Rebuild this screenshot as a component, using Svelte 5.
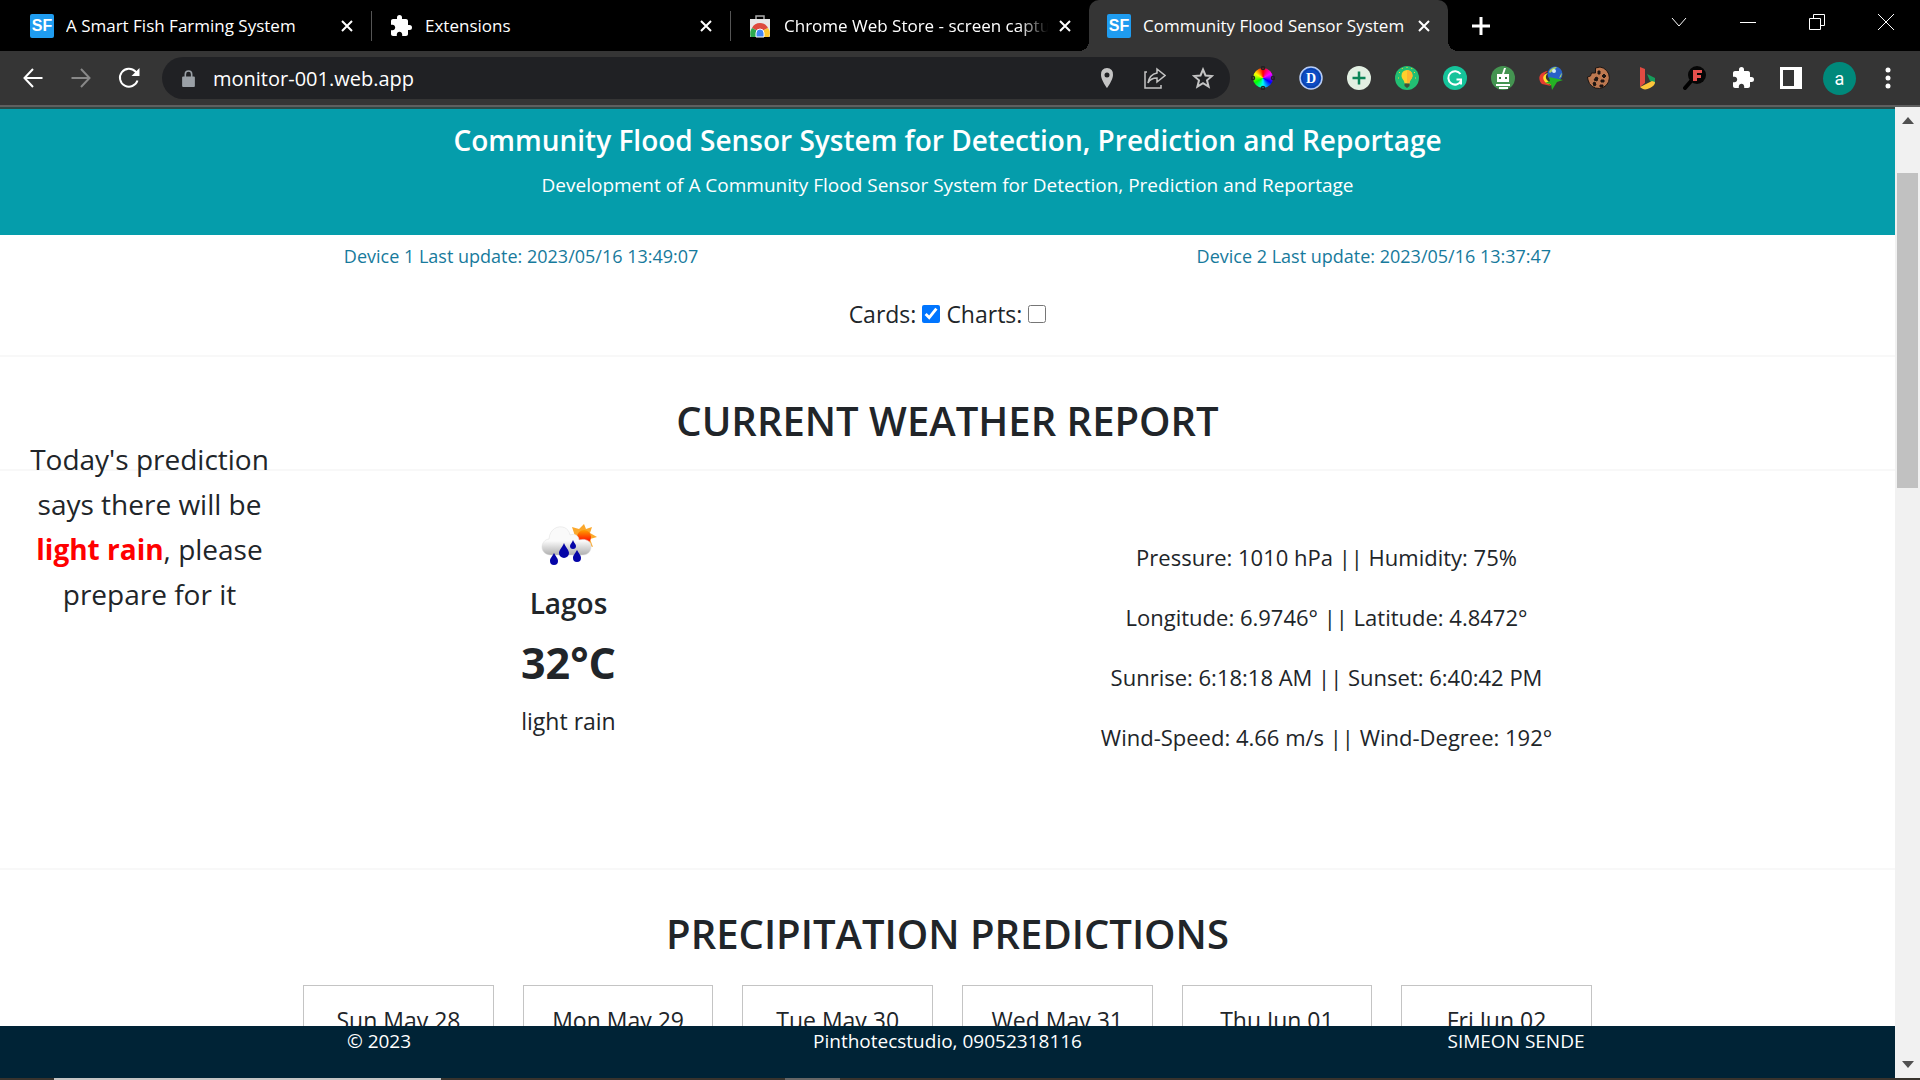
<script lang="ts">
	const tabs = [
		{ title: 'A Smart Fish Farming System', icon: 'sf', active: false },
		{ title: 'Extensions', icon: 'puzzle', active: false },
		{ title: 'Chrome Web Store - screen captu', icon: 'store', active: false },
		{ title: 'Community Flood Sensor System', icon: 'sf', active: true }
	];

	const extensions = ['Color wheel', 'Dictionary', 'Add', 'Ideas', 'Grammar', 'Robot', 'Download manager', 'Cookies', 'Bing', 'Font finder'];

	const readings = [
		'Pressure: 1010 hPa || Humidity: 75%',
		'Longitude: 6.9746° || Latitude: 4.8472°',
		'Sunrise: 6:18:18 AM || Sunset: 6:40:42 PM',
		'Wind-Speed: 4.66 m/s || Wind-Degree: 192°'
	];

	const days = ['Sun May 28', 'Mon May 29', 'Tue May 30', 'Wed May 31', 'Thu Jun 01', 'Fri Jun 02'];

	let showCards = $state(true);
	let showCharts = $state(false);
	let address = $state('monitor-001.web.app');
</script>

{#snippet puzzle()}
	<svg viewBox="0 0 24 24" fill="#fff">
		<path d="M20.5 11H19V7c0-1.100-.9-2-2-2h-4V3.500a2.500 2.500 0 0 0-5 0V5H4c-1.100 0-2 .9-2 2v3.800h1.500c1.500 0 2.700 1.200 2.700 2.700S5 16.200 3.500 16.200H2V20c0 1.100.9 2 2 2h3.800v-1.500c0-1.500 1.200-2.700 2.700-2.700s2.700 1.200 2.700 2.700V22H17c1.100 0 2-.9 2-2v-4h1.500a2.500 2.500 0 0 0 0-5z" />
	</svg>
{/snippet}

<div class="window">
	<div class="tab-strip">
		{#each tabs as tab}
			<div class="tab" class:active={tab.active}>
				<span class="favicon">
					{#if tab.icon === 'sf'}
						<span class="sf">SF</span>
					{:else if tab.icon === 'puzzle'}
						{@render puzzle()}
					{:else}
						<svg viewBox="0 0 24 24">
							<path d="M8 5V2h8v3" fill="none" stroke="#aaa" stroke-width="1.500" />
							<path d="M2 5h20v17a1 1 0 0 1-1 1H3a1 1 0 0 1-1-1z" fill="#e8e8e8" />
							<path d="M12 18L4 14a9 9 0 0 1 16 0z" fill="#dd4b3e" />
							<path d="M12 18L4 14a9 9 0 0 0-1 9h8z" fill="#2da94f" />
							<path d="M12 18l8-4a9 9 0 0 1 1 9H11z" fill="#fdc72f" />
							<path d="M8 23v-4a4 4 0 0 1 8 0v4z" fill="#4285f4" stroke="#fff" />
						</svg>
					{/if}
				</span>
				<span class="tab-title" class:faded={tab.icon === 'store'}>{tab.title}</span>
				<button class="tab-close" aria-label="Close tab">
					<svg viewBox="0 0 12 12"><path d="M1 1l10 10M11 1L1 11" stroke="#fff" stroke-width="2" /></svg>
				</button>
			</div>
		{/each}
		<button class="new-tab" aria-label="New tab">
			<svg viewBox="0 0 18 18"><path d="M9 0v18M0 9h18" stroke="#fff" stroke-width="3" /></svg>
		</button>
		<div class="window-controls">
			<button aria-label="Search tabs"><svg viewBox="0 0 16 16"><path d="M1 4l7 8 7-8" /></svg></button>
			<button aria-label="Minimize"><svg viewBox="0 0 16 16"><path d="M0 8.500h16" /></svg></button>
			<button aria-label="Restore">
				<svg viewBox="0 0 16 16"><path d="M.5 4.500h11v11H.5zM4.500 4V.5h11v11H12" /></svg>
			</button>
			<button aria-label="Close"><svg viewBox="0 0 16 16"><path d="M0 0l16 16M16 0L0 16" /></svg></button>
		</div>
	</div>

	<div class="toolbar">
		<div class="nav-buttons">
			<button aria-label="Back">
				<svg viewBox="0 0 20 20" stroke="#fff"><path d="M19.500 10H2M10 1L1.500 10l8.500 9" /></svg>
			</button>
			<button aria-label="Forward">
				<svg viewBox="0 0 20 20" stroke="#888"><path d="M.5 10H18M10 1l8.500 9-8.500 9" /></svg>
			</button>
			<button aria-label="Reload">
				<svg viewBox="0 0 20 20" stroke="#fff"><path d="M18.500 12.500a9 9 0 1 1-2-9L18 5" /><path d="M20.500 0v8h-8z" fill="#fff" stroke="none" /></svg>
			</button>
		</div>

		<div class="omnibox">
			<svg class="lock" viewBox="0 0 12 16">
				<rect y="6" width="12" height="10" rx="1" fill="#9aa0a6" />
				<path d="M3 7V4a3 3 0 0 1 6 0v3" fill="none" stroke="#9aa0a6" stroke-width="1.500" />
			</svg>
			<input type="text" aria-label="Address" bind:value={address} />
			<button aria-label="Location">
				<svg viewBox="0 0 22 22"><path d="M11 1a6 6 0 0 0-6 7c0 5 6 13 6 13s6-8 6-13a6 6 0 0 0-6-7zm0 4.500a2.500 2.500 0 1 1 0 5 2.500 2.500 0 0 1 0-5z" fill="#c4c4c4" /></svg>
			</button>
			<button aria-label="Share">
				<svg viewBox="0 0 22 22" fill="none" stroke="#c4c4c4" stroke-width="1.500"><path d="M3 5H1v16h16v-3M13 2l8 6.500-8 6.500v-4c-4 0-7 1-9 5 1-6 4-9 9-10z" /></svg>
			</button>
			<button aria-label="Bookmark">
				<svg viewBox="0 0 22 22" fill="none" stroke="#c4c4c4" stroke-width="2"><path d="M11 2.500l2.500 6 6.500.5-5 4.300 1.600 6.400L11 16.200l-5.600 3.500L7 13.300 2 9l6.500-.5z" /></svg>
			</button>
		</div>

		<div class="extensions">
			{#each extensions as name, i}
				<button aria-label={name}>
					{#if i === 0}
						<span class="wheel">
							<svg viewBox="0 0 24 24" fill="none" stroke="#222" stroke-width="1.500">
								<circle cx="12" cy="2" r="1.500" /><circle cx="12" cy="22" r="1.500" />
								<circle cx="2" cy="12" r="1.500" /><circle cx="22" cy="12" r="1.500" />
							</svg>
						</span>
					{:else}
						<svg viewBox="0 0 24 24">
							{#if i === 1}
								<circle cx="12" cy="12" r="11" fill="#0b4bc4" stroke="#b9cdf5" stroke-width="1.500" />
								<circle cx="12" cy="12" r="9" fill="none" stroke="#0b3ea0" />
								<text x="12" y="17" class="serif">D</text>
							{:else if i === 2}
								<circle cx="12" cy="12" r="12" fill="#e2efe2" />
								<path d="M12 5.500v13M5.500 12h13" stroke="#0b8457" stroke-width="2.500" />
							{:else if i === 3}
								<circle cx="12" cy="12" r="12" fill="#22bf73" />
								<path d="M12 4a5.500 5.500 0 0 0-5.500 5.500c0 3.500 3 4.500 3 8h5c0-3.500 3-4.500 3-8A5.500 5.500 0 0 0 12 4z" fill="#ffd02c" />
								<path d="M12 4v13.500h2.500c0-3.500 3-4.500 3-8A5.500 5.500 0 0 0 12 4z" fill="#fdb62f" />
								<path d="M9.500 17.500h5V20L12 22l-2.500-2z" fill="#40513b" />
								<path d="M3 12h1M20 12h1M4 6l1 1M19 7l1-1M12 1v1M7 2l.5 1M17 2l-.5 1" stroke="#ffd02c" />
							{:else if i === 4}
								<circle cx="12" cy="12" r="12" fill="#15c39a" />
								<path d="M17.500 8a6.700 6.700 0 1 0 .5 7M13.500 13.500H18v5" fill="none" stroke="#fff" stroke-width="2" />
							{:else if i === 5}
								<circle cx="12" cy="12" r="12" fill="#449451" />
								<path d="M11 8l2-6h2l-2 6h5v8H6V8zM5 18h14v2H5zM8 21h9v2H8z" fill="#fff" />
								<path d="M8 11h2v2H8zM14 11h2v2h-2z" fill="#347a42" />
							{:else if i === 6}
								<circle cx="16" cy="8" r="7.500" fill="#2860c8" />
								<path d="M10 6c1-3 4-5 8-5l-3 3-4 3zM22 8l1-1-1 4-2 1z" fill="#a8cf63" />
								<circle cx="15" cy="5" r="2" fill="#d4e9f7" />
								<path d="M9 5C0 6-2 13 3 18l9 2-6-6c-2-3-1-6 3-9z" fill="#e63b2e" />
								<path d="M9 7c-6 2-6 6-2 10l6 2-5-5c-2-3-1-5 1-7z" fill="#ffe12d" />
								<path d="M10 11l14 3-6 2-5 8-1-6-6-1 5-2z" fill="#24b324" />
							{:else if i === 7}
								<path d="M13 1a10.800 10.800 0 1 1-12 13l-.500-3 3-1 1-3 4 0V2z" fill="#bd7850" stroke="#1c1512" />
								<path d="M11 5h2v3h-2zM17 8l2 2-2 2-2-2zM9 11l2 1-1 3-3-1zM14 14h3v2h-3zM6 17l2-1 1 3-2 1zM13 19h3v2h-3z" fill="#1c1512" stroke="#1c1512" />
							{:else if i === 8}
								<path d="M5 1l5 2v14l-5 4z" fill="#e14b42" />
								<path d="M12 8l8 4v6l-5-3z" fill="#169c5b" />
								<path d="M5 21l12-6 3 1c0 3-2 4-5 6-4 2-7 2-10-1z" fill="#fcc53a" />
							{:else}
								<path d="M9 14l-7 8" stroke="#000" stroke-width="4" stroke-linecap="round" />
								<circle cx="14" cy="9" r="9" fill="#060606" />
								<path d="M10 4h9v3h-5v2h4v3h-4v3h-4z" fill="#e6504e" />
							{/if}
						</svg>
					{/if}
				</button>
			{/each}
			<button aria-label="Extensions">{@render puzzle()}</button>
			<button aria-label="Side panel">
				<svg viewBox="0 0 24 24"><path d="M1 1h22v22H1zM4 4v16h11V4z" fill="#fff" fill-rule="evenodd" /></svg>
			</button>
			<button class="avatar">a</button>
			<button aria-label="Menu">
				<svg viewBox="0 0 24 24" fill="#fff"><circle cx="12" cy="4" r="2.500" /><circle cx="12" cy="12" r="2.500" /><circle cx="12" cy="20" r="2.500" /></svg>
			</button>
		</div>
	</div>

	<div class="viewport">
		<div class="page">
			<header>
				<h1>Community Flood Sensor System for Detection, Prediction and Reportage</h1>
				<p>Development of A Community Flood Sensor System for Detection, Prediction and Reportage</p>
			</header>

			<div class="updates">
				<span>Device 1 Last update: 2023/05/16 13:49:07</span>
				<span>Device 2 Last update: 2023/05/16 13:37:47</span>
			</div>

			<div class="toggles">
				<label for="cards">Cards:</label>
				<input id="cards" type="checkbox" bind:checked={showCards} />
				<label for="charts">Charts:</label>
				<input id="charts" type="checkbox" bind:checked={showCharts} />
			</div>

			<h2>CURRENT WEATHER REPORT</h2>

			<section class="weather">
				<aside>Today's prediction says there will be <strong>light rain</strong>, please prepare for it</aside>
				<div class="summary">
					<svg class="weather-icon" viewBox="0 0 56 44">
						<defs>
							<linearGradient id="cloud" x2="0" y2="1">
								<stop offset="0.5" stop-color="#fafafa" />
								<stop offset="1" stop-color="#b0b0b0" />
							</linearGradient>
							<linearGradient id="sun" x2="0" y2="1">
								<stop offset="0" stop-color="#ffa000" />
								<stop offset="0.7" stop-color="#ff2000" />
							</linearGradient>
						</defs>
						<path d="M43 1l2 5 6-2-2 6 7 4-7 2 3 8-8-3-8 1-2-9-3-9 7 2z" fill="#fba82c" />
						<circle cx="43" cy="14" r="7" fill="url(#sun)" />
						<path d="M9 32C-2 31-1 17 8 16 9 1 27 0 29 12c5-2 9 1 9 5 6-2 13 1 12 7 0 5-4 8-8 8z" fill="url(#cloud)" stroke="#ddd" stroke-width="0.500" />
						<g fill="#0505a8">
							<path d="M23 20c2 5 5 7 5 10a5 5 0 0 1-10 0c0-3 3-5 5-10z" />
							<path d="M13 30c2 4 4 5 4 8a4 4 0 0 1-8 0c0-3 2-4 4-8z" />
							<path d="M36 27c2 4 4 5 4 8a4 4 0 0 1-8 0c0-3 2-4 4-8z" />
							<path d="M32 17c1 3 3 4 3 6a3 3 0 0 1-6 0c0-2 2-3 3-6z" />
						</g>
					</svg>
					<h3>Lagos</h3>
					<strong class="temperature">32°C</strong>
					<p>light rain</p>
				</div>
				<div class="readings">
					{#each readings as reading}
						<p>{reading}</p>
					{/each}
				</div>
			</section>

			<h2 class="plain">PRECIPITATION PREDICTIONS</h2>
			<div class="days">
				{#each days as day}
					<article>{day}</article>
				{/each}
			</div>

			<footer>
				<span>© 2023</span>
				<span>Pinthotecstudio, 09052318116</span>
				<span>SIMEON SENDE</span>
			</footer>
		</div>

		<div class="scrollbar">
			<svg viewBox="0 0 12 8"><path d="M0 7l6-7 6 7z" fill="#505050" /></svg>
			<div class="track"><div class="thumb"></div></div>
			<svg viewBox="0 0 12 8"><path d="M0 1l6 7 6-7z" fill="#505050" /></svg>
		</div>
	</div>

	<div class="taskbar"><span></span><span></span></div>
</div>

<style>
	.window {
		height: 100vh;
		display: flex;
		flex-direction: column;
		overflow: hidden;
		font-family: 'Open Sans', 'Noto Sans', sans-serif;
		color: #212529;
	}

	button {
		display: flex;
		align-items: center;
		justify-content: center;
		padding: 0;
		border: 0;
		background: none;
	}

	svg {
		display: block;
		flex: none;
	}

	.tab-strip {
		display: flex;
		height: 51px;
		flex: none;
		padding-left: 12px;
		background: #000;
	}

	.tab {
		position: relative;
		display: flex;
		align-items: center;
		width: 359px;
		padding: 0 18px;
		box-sizing: border-box;
		color: #fff;
		font-size: 17px;
	}

	.tab:nth-child(2)::before,
	.tab:nth-child(3)::before {
		content: '';
		position: absolute;
		left: 0;
		width: 1px;
		height: 30px;
		background: #555;
	}

	.tab.active {
		background: #353535;
		border-radius: 10px 10px 0 0;
	}

	.tab.active::before,
	.tab.active::after {
		content: '';
		position: absolute;
		bottom: 0;
		width: 10px;
		height: 10px;
	}

	.tab.active::before {
		right: 100%;
		background: radial-gradient(circle at 0 0, #000 10px, #353535 10px);
	}

	.tab.active::after {
		left: 100%;
		background: radial-gradient(circle at 100% 0, #000 10px, #353535 10px);
	}

	.favicon,
	.favicon svg {
		width: 24px;
		height: 24px;
		flex: none;
	}

	.sf {
		display: block;
		border-radius: 2px;
		background: #1f9cf0;
		font: 700 16px/24px 'Liberation Sans Narrow', 'Liberation Sans', sans-serif;
		text-align: center;
	}

	.tab-title {
		flex: 1;
		min-width: 0;
		margin: 0 8px 0 12px;
		overflow: hidden;
		white-space: nowrap;
	}

	.tab-title.faded {
		mask-image: linear-gradient(to right, #000 88%, transparent 99%);
	}

	.tab-close svg {
		width: 12px;
		height: 12px;
	}

	.new-tab {
		width: 66px;
	}

	.new-tab svg {
		width: 18px;
		height: 18px;
	}

	.window-controls {
		display: flex;
		margin-left: auto;
		padding-bottom: 8px;
	}

	.window-controls button {
		width: 69px;
	}

	.window-controls svg {
		width: 16px;
		height: 16px;
		fill: none;
		stroke: #fff;
	}

	.toolbar {
		display: flex;
		align-items: center;
		height: 54px;
		flex: none;
		border-bottom: 2px solid #5f5f5f;
		background: #353535;
	}

	.nav-buttons {
		display: flex;
		gap: 28px;
		padding: 0 23px;
	}

	.nav-buttons svg {
		width: 20px;
		height: 20px;
		fill: none;
		stroke-width: 2;
		overflow: visible;
	}

	.omnibox {
		flex: 1;
		display: flex;
		align-items: center;
		gap: 26px;
		height: 42px;
		padding: 0 16px 0 20px;
		border-radius: 21px;
		background: #202124;
	}

	.omnibox input {
		flex: 1;
		min-width: 0;
		margin-left: -8px;
		padding: 0;
		border: 0;
		background: none;
		color: #fff;
		font: 20px 'Open Sans', sans-serif;
	}

	.omnibox svg {
		width: 22px;
		height: 22px;
	}

	.omnibox .lock {
		width: 13px;
		height: 17px;
	}

	.extensions {
		display: flex;
		padding: 0 8px 0 9px;
	}

	.extensions button {
		width: 48px;
		height: 42px;
	}

	.extensions svg {
		width: 24px;
		height: 24px;
	}

	.serif {
		fill: #fff;
		font: 700 14px 'Liberation Serif', serif;
		text-anchor: middle;
	}

	.wheel {
		display: flex;
		align-items: center;
		justify-content: center;
		width: 20px;
		height: 20px;
		border-radius: 50%;
		background: conic-gradient(red, #f0f, #00f, #0ff, #0f0, #ff0, red);
	}

	.extensions .avatar {
		width: 33px;
		height: 33px;
		margin: 5px 8px;
		border-radius: 50%;
		background: #00897b;
		color: #fff;
		font: 18px Roboto, sans-serif;
	}

	.viewport {
		flex: 1;
		display: flex;
		min-height: 0;
	}

	.page {
		position: relative;
		flex: 1;
		overflow: hidden;
		background: #fff;
		text-align: center;
	}

	header {
		padding: 11px 0 34px;
		border-top: 2px solid #2c4a47;
		background: #059dab;
		color: #fff;
	}

	h1 {
		margin: 0;
		font-size: 28px;
		font-weight: 600;
		line-height: 40px;
	}

	header p {
		margin: 9px 0 0;
		font-size: 19px;
		line-height: 32px;
	}

	.updates {
		display: grid;
		grid-template-columns: 1fr 1fr;
		width: 90%;
		margin: 7px auto 0;
		color: #177a9c;
		font-size: 18px;
		line-height: 28px;
	}

	.toggles {
		display: flex;
		align-items: center;
		justify-content: center;
		gap: 6px;
		padding: 26px 0 23px;
		font-size: 23px;
		line-height: 36px;
	}

	.toggles input {
		width: 18px;
		height: 18px;
		margin: 0;
		accent-color: #0075ff;
	}

	h2 {
		margin: 0;
		padding: 40px 0 24px;
		border: solid #f8f8f8;
		border-width: 2px 0;
		font-size: 40px;
		font-weight: 600;
		line-height: 48px;
	}

	h2.plain {
		padding-bottom: 27px;
		border-bottom: 0;
	}

	.weather {
		position: relative;
		display: grid;
		grid-template-columns: 1fr 1fr;
		width: 80%;
		height: 397px;
		margin: 0 auto;
	}

	aside {
		position: absolute;
		left: -165px;
		top: -34px;
		width: 250px;
		font-size: 28px;
		line-height: 45px;
	}

	aside strong {
		color: red;
	}

	.summary {
		display: flex;
		flex-direction: column;
		align-items: center;
		padding-top: 52px;
	}

	.weather-icon {
		width: 56px;
		height: 44px;
	}

	h3 {
		margin: 16px 0 0;
		font-size: 28px;
		font-weight: 600;
		line-height: 40px;
	}

	.temperature {
		margin: 12px 0;
		font-size: 43px;
		line-height: 56px;
	}

	.summary p {
		margin: 0;
		font-size: 23px;
		line-height: 36px;
	}

	.readings {
		display: flex;
		flex-direction: column;
		gap: 24px;
		padding-top: 68px;
	}

	.readings p {
		margin: 0;
		font-size: 22px;
		line-height: 36px;
	}

	.days {
		display: grid;
		grid-template-columns: repeat(6, 1fr);
		gap: 29px;
		width: 68%;
		margin: 0 auto;
	}

	article {
		height: 200px;
		padding-top: 16px;
		border: 1px solid #c4c4c4;
		font-size: 23px;
		line-height: 36px;
	}

	footer {
		position: absolute;
		inset: auto 0 0;
		display: grid;
		grid-template-columns: repeat(3, 1fr);
		height: 52px;
		padding: 0 5%;
		background: #002336;
		color: #fff;
		font-size: 19px;
		line-height: 30px;
	}

	.scrollbar {
		display: flex;
		flex-direction: column;
		align-items: center;
		justify-content: space-between;
		width: 25px;
		padding: 10px 0;
		box-sizing: border-box;
		background: #f1f1f1;
	}

	.scrollbar svg {
		width: 12px;
		height: 8px;
	}

	.track {
		flex: 1;
		width: 21px;
		padding: 48px 0;
	}

	.thumb {
		height: calc(100% * 3 / 8);
		background: #c1c1c1;
	}

	.taskbar {
		display: flex;
		gap: 344px;
		height: 2px;
		flex: none;
		padding-left: 54px;
		background: #38332d;
	}

	.taskbar span:first-child {
		width: 387px;
		background: #c4c4c4;
	}

	.taskbar span:last-child {
		width: 55px;
		background: #666;
	}
</style>
